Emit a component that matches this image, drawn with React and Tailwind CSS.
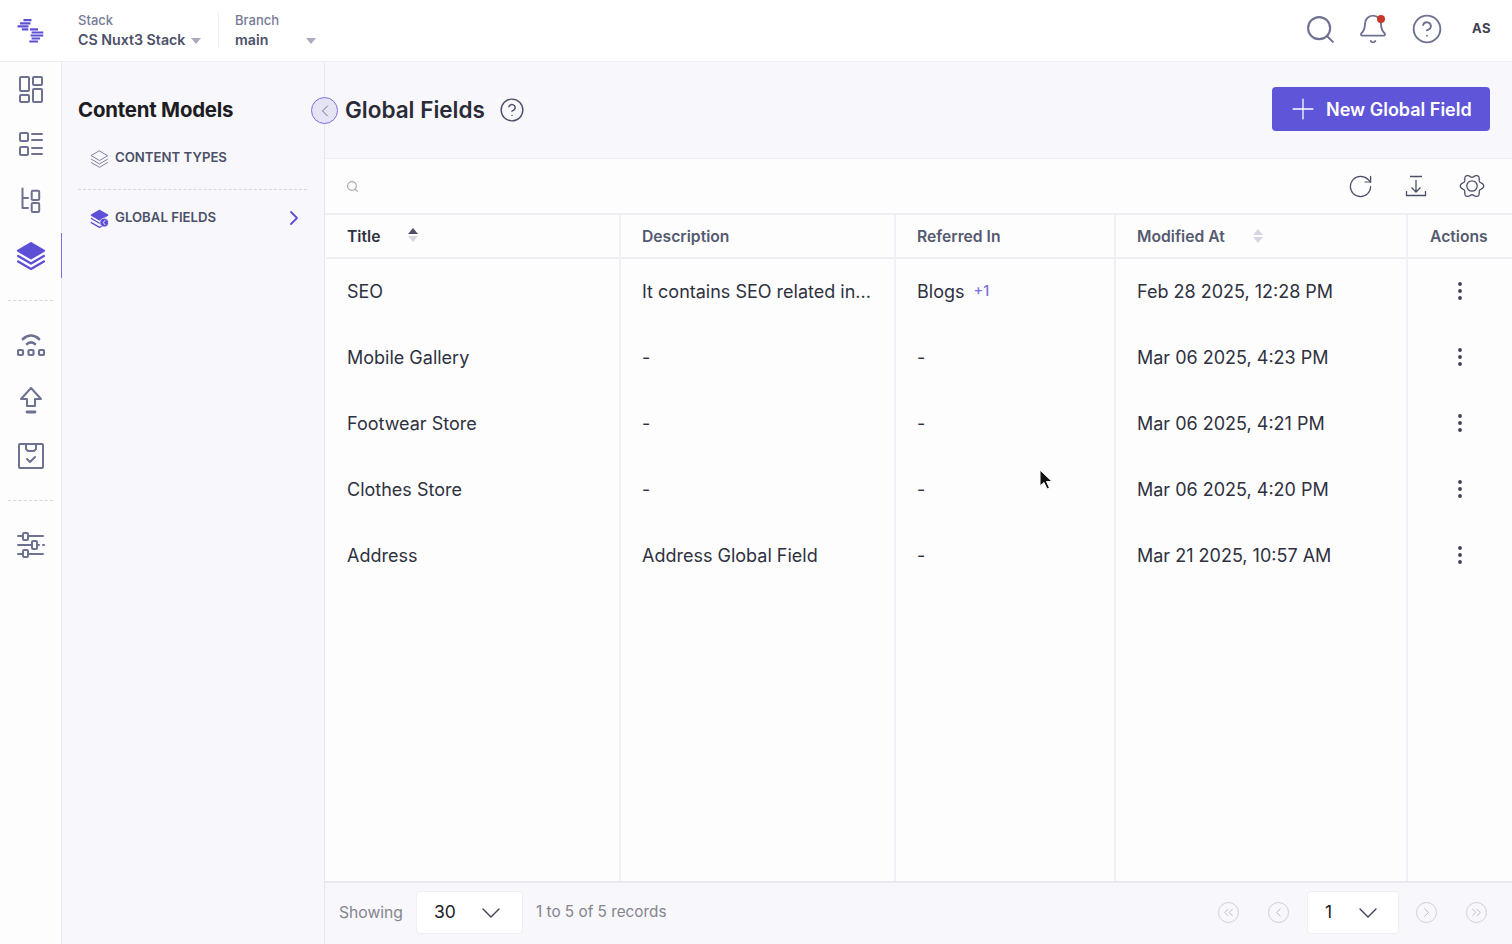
import React from 'react';
import { ChevronDown, ChevronLeft, ChevronRight, ChevronsLeft, ChevronsRight, CircleHelp, Plus, RotateCw, Search, MoreVertical, Bell } from 'lucide-react';

const FONT = 'font-[Inter,sans-serif]';

function Logo() {
  return (
    <svg width="28" height="24" viewBox="0 0 28 24" fill="none" stroke="#5d50d6" strokeWidth="2.2">
      <path d="M6.500 1.200h8M3 4.300h10.500M.5 7.400h11M4.800 10.400h6.500" />
      <path d="M13 10.400h8M14.600 13.500h11.700M13.600 16.500h12.700M14.600 19.500h8.400M12.300 22.500h8.700" />
    </svg>
  );
}

const RailIcon = ({ children }) => (
  <svg width="28" height="28" viewBox="0 0 28 28" fill="none" stroke="#6e7291" strokeWidth="2" strokeLinejoin="round" strokeLinecap="round">
    {children}
  </svg>
);

function LayersIcon({ size = 28, color = '#6e7291', filled, strokeWidth = 1.3 }) {
  return (
    <svg width={size} height={size} viewBox="0 0 28 28" fill="none" stroke={color} strokeWidth={strokeWidth} strokeLinejoin="round" strokeLinecap="round">
      <path d="M14 3 26 10 14 17 2 10Z" fill={filled ? color : 'none'} />
      <path d="M2 15l12 7 12-7" />
      <path d="M2 20l12 7 12-7" />
    </svg>
  );
}

// global fields icon: filled stack with a small clock badge
function GlobalFieldIcon() {
  return (
    <svg width="19" height="19" viewBox="0 0 28 28" fill="none" stroke="#5d50d6" strokeWidth="2" strokeLinejoin="round" strokeLinecap="round">
      <path d="M14 2 26 9 14 16 2 9Z" fill="#5d50d6" />
      <path d="M2 14l12 7M2 20l12 7 4-2" />
      <circle cx="21" cy="20" r="6.500" fill="#5d50d6" stroke="#f7f7fc" strokeWidth="1" />
      <path d="M22 17l-2.500 3 2.500 3" stroke="#f7f7fc" strokeWidth="1.400" />
    </svg>
  );
}

const gearPath = Array.from({ length: 72 }, (_, i) => {
  const a = (i * 5 * Math.PI) / 180;
  const r = 10.2 + 1.5 * Math.cos(6 * a);
  return `${i === 0 ? 'M' : 'L'}${(13 + r * Math.cos(a)).toFixed(2)} ${(13 + r * Math.sin(a)).toFixed(2)}`;
}).join('') + 'Z';

function Rail() {
  return (
    <div className="w-[62px] shrink-0 flex flex-col items-center bg-[#fdfdfe] border-r border-[#e9e9f1] relative">
      <div className="h-[54px] flex items-center justify-center"><RailIcon>
        <rect x="3" y="2" width="9" height="14" rx="1" /><rect x="16" y="2" width="9" height="8" rx="1" />
        <rect x="3" y="20" width="9" height="7" rx="1" /><rect x="16" y="14" width="9" height="13" rx="1" />
      </RailIcon></div>
      <div className="h-[56px] flex items-center justify-center"><RailIcon>
        <rect x="3" y="3" width="8" height="8" rx="1" /><rect x="3" y="17" width="8" height="8" rx="1" />
        <path d="M15 4h10M15 10h10M15 18h10M15 24h10" />
      </RailIcon></div>
      <div className="h-[55px] flex items-center justify-center"><RailIcon>
        <path d="M5.500 2.500V22H11M5.500 12H11" /><rect x="14.700" y="4.700" width="7.500" height="9.300" rx="1" /><rect x="14.700" y="17" width="7.500" height="9" rx="1" />
      </RailIcon></div>
      <div className="h-[56px] flex items-center justify-center">
        <LayersIcon color="#5d50d6" filled strokeWidth={2.2} size={30} />
      </div>
      <div className="absolute right-[-1px] top-[171px] w-[1px] h-[45px] bg-[#7b70e0]" />
      <div className="w-[45px] border-t border-dashed border-[#d5d6e0] mt-[17px]" />
      <div className="h-[88px] flex items-center justify-center"><RailIcon>
        <path d="M6 8c5-4.500 11-4.500 16 0" strokeWidth="2.800" /><path d="M10 13c2.500-2 5.500-2 8 0" strokeWidth="2.600" />
        <rect x="1" y="19" width="5" height="5" rx="1" strokeWidth="2.200" /><rect x="11.500" y="19" width="5" height="5" rx="1" strokeWidth="2.200" /><rect x="22" y="19" width="5" height="5" rx="1" strokeWidth="2.200" />
      </RailIcon></div>
      <div className="h-[22px] flex items-center justify-center"><RailIcon>
        <path d="M14 2 4 13h6v7h8v-7h6Z" /><path d="M10 26h8" strokeWidth="2.800" />
      </RailIcon></div>
      <div className="h-[89px] flex items-center justify-center"><RailIcon>
        <rect x="2" y="2" width="24" height="24" rx="1" /><path d="M9 2v5l2 2h6l2-2V2M10 17l3 3 5-5" />
      </RailIcon></div>
      <div className="w-[45px] border-t border-dashed border-[#d5d6e0]" />
      <div className="h-[88px] flex items-center justify-center"><RailIcon>
        <path d="M1 5h4M12 5h14M1 14h13M21 14h1M26 14h1M1 23h4M12 23h14" /><rect x="6" y="2" width="5" height="7" rx="1" /><rect x="15" y="10" width="5" height="8" rx="1" /><rect x="6" y="19" width="5" height="7" rx="1" />
      </RailIcon></div>
    </div>
  );
}

function TopBar() {
  return (
    <div className="h-[62px] shrink-0 flex items-center bg-white border-b border-[#ededf3]">
      <div className="w-[62px] flex justify-center pt-[1px]"><Logo /></div>
      <div className="pl-[16px] w-[140px] shrink-0">
        <div className="text-[13px] leading-[18px] font-medium text-[#767b98]">Stack</div>
        <div className="flex items-center gap-[6px] text-[14.200px] leading-[22px] font-semibold text-[#4c5067] whitespace-nowrap">
          CS Nuxt3 Stack
          <span className="w-0 h-0 border-x-[5px] border-x-transparent border-t-[6px] border-t-[#a9acbc] mt-[2px]" />
        </div>
      </div>
      <div className="ml-[16px] h-[36px] border-l border-[#f0f0f4]" />
      <div className="pl-[16px] w-[97px]">
        <div className="text-[13px] leading-[18px] font-medium text-[#767b98]">Branch</div>
        <div className="flex items-center justify-between text-[14.200px] leading-[22px] font-semibold text-[#4c5067]">
          main
          <span className="w-0 h-0 border-x-[5px] border-x-transparent border-t-[6px] border-t-[#a9acbc] mt-[2px]" />
        </div>
      </div>
      <div className="ml-auto flex items-center text-[#6e7291] -mt-[3px]">
        <Search size={33} strokeWidth={1.500} />
        <div className="relative ml-[20px] mr-[22px]">
          <Bell size={32} strokeWidth={1.400} />
          <span className="absolute top-[2px] right-[4px] w-[8px] h-[8px] rounded-full bg-[#c8372a]" />
        </div>
        <CircleHelp size={32} strokeWidth={1.400} />
        <div className="w-[69px] pl-[29px] text-[13px] font-bold tracking-[0.5px] text-[#3f4254]">AS</div>
      </div>
    </div>
  );
}

function SidePanel() {
  return (
    <div className="w-[263px] shrink-0 bg-[#f7f7fc] border-r border-[#e6e6ee] pl-[16px] pr-[17px] relative">
      <div className="text-[20.400px] leading-[28px] font-bold text-[#1c1c22] tracking-[-0.2px] mt-[34px]">Content Models</div>
      <div className="flex items-center gap-[6px] h-[32px] mt-[18px] pl-[12px] text-[13.200px] font-semibold text-[#4c5067]">
        <LayersIcon size={19} />
        CONTENT TYPES
      </div>
      <div className="border-t border-dashed border-[#d5d6e0] mt-[15px]" />
      <div className="flex items-center gap-[6px] h-[32px] mt-[12px] pl-[12px] text-[13.200px] font-semibold text-[#4c5067]">
        <GlobalFieldIcon />
        GLOBAL FIELDS
        <ChevronRight className="ml-auto mr-[1px] text-[#5d50d6]" size={24} strokeWidth={1.800} />
      </div>
      <div className="absolute right-[-14px] top-[35px] w-[27px] h-[27px] rounded-full bg-[#e4e4f5] border border-[#7b70e0] flex items-center justify-center text-[#6e7291]">
        <ChevronLeft size={20} strokeWidth={1.200} />
      </div>
    </div>
  );
}

const rows = [
  { title: 'SEO', description: 'It contains SEO related in...', referred: 'Blogs', extra: '+1', modified: 'Feb 28 2025, 12:28 PM' },
  { title: 'Mobile Gallery', description: '-', referred: '-', modified: 'Mar 06 2025, 4:23 PM' },
  { title: 'Footwear Store', description: '-', referred: '-', modified: 'Mar 06 2025, 4:21 PM' },
  { title: 'Clothes Store', description: '-', referred: '-', modified: 'Mar 06 2025, 4:20 PM' },
  { title: 'Address', description: 'Address Global Field', referred: '-', modified: 'Mar 21 2025, 10:57 AM' },
];

function SortArrows({ active }) {
  return (
    <span className="flex flex-col gap-[2px]">
      <span className={`w-0 h-0 border-x-[5px] border-x-transparent border-b-[6px] ${active ? 'border-b-[#4c5067]' : 'border-b-[#d5d6e0]'}`} />
      <span className="w-0 h-0 border-x-[5px] border-x-transparent border-t-[6px] border-t-[#d5d6e0]" />
    </span>
  );
}

function Cell({ children }) {
  return <div className="h-[66px] flex items-center px-[21px] pb-[2px] text-[18px] text-[#2f3140] whitespace-nowrap">{children}</div>;
}

function HeaderCell({ children, dark }) {
  return (
    <div className={`h-[44px] shrink-0 flex items-center px-[21px] pt-[2px] text-[15.700px] font-semibold border-b-2 border-[#eeeef3] ${dark ? 'text-[#2f3140]' : 'text-[#565a70]'}`}>
      {children}
    </div>
  );
}

function Table() {
  return (
    <div className="flex-1 flex min-h-0 bg-[#fdfdfe]">
      <div className="w-[296px] pl-[1px] flex flex-col border-r-2 border-[#f1f1f5]">
        <HeaderCell dark>Title<span className="ml-[28px] -mt-[4px]"><SortArrows active /></span></HeaderCell>
        {rows.map((r) => <Cell key={r.title}>{r.title}</Cell>)}
      </div>
      <div className="w-[275px] flex flex-col border-r-2 border-[#f1f1f5]">
        <HeaderCell>Description</HeaderCell>
        {rows.map((r) => <Cell key={r.title}>{r.description}</Cell>)}
      </div>
      <div className="w-[220px] flex flex-col border-r-2 border-[#f1f1f5]">
        <HeaderCell>Referred In</HeaderCell>
        {rows.map((r) => (
          <Cell key={r.title}>
            {r.referred}
            {r.extra && <span className="ml-[9px] text-[14.500px] font-medium text-[#7b70e0]">{r.extra}</span>}
          </Cell>
        ))}
      </div>
      <div className="w-[292px] flex flex-col border-r-2 border-[#f1f1f5]">
        <HeaderCell>Modified At<span className="ml-[28px] -mt-[2px]"><SortArrows /></span></HeaderCell>
        {rows.map((r) => <Cell key={r.title}>{r.modified}</Cell>)}
      </div>
      <div className="flex-1 flex flex-col">
        <HeaderCell><span className="pl-[1px]">Actions</span></HeaderCell>
        {rows.map((r) => (
          <div key={r.title} className="h-[66px] pb-[2px] flex items-center justify-center text-[#3f4254]">
            <MoreVertical size={24} strokeWidth={1.800} />
          </div>
        ))}
      </div>
    </div>
  );
}

function Select({ value, className }) {
  return (
    <div className={`h-[43px] flex items-center justify-between bg-white border border-[#eeeef3] rounded-[4px] text-[17.500px] text-[#1c1c22] ${className}`}>
      {value}
      <ChevronDown size={32} strokeWidth={1} className="text-[#3f4254]" />
    </div>
  );
}

function PageBtn({ children }) {
  return (
    <span className="w-[21px] h-[21px] rounded-full border-[1.500px] border-[#cfcfd6] flex items-center justify-center text-[#b9b9c1]">
      {children}
    </span>
  );
}

function Footer() {
  return (
    <div className="h-[63px] shrink-0 flex items-center bg-[#f7f7fc] border-t-2 border-[#e9e9f1] pl-[14px] pr-[25px] pb-[2px] text-[#85858e]">
      <span className="text-[15.700px]">Showing</span>
      <Select value="30" className="w-[107px] ml-[13px] pl-[17px] pr-[15px]" />
      <span className="ml-[13px] text-[15.300px]">1 to 5 of 5 records</span>
      <div className="ml-auto flex items-center">
        <PageBtn><ChevronsLeft size={15} strokeWidth={1.500} /></PageBtn>
        <span className="ml-[29px]" />
        <PageBtn><ChevronLeft size={15} strokeWidth={1.500} /></PageBtn>
        <Select value="1" className="w-[92px] ml-[18px] mr-[17px] pl-[17px] pr-[14px]" />
        <PageBtn><ChevronRight size={15} strokeWidth={1.500} /></PageBtn>
        <span className="ml-[29px]" />
        <PageBtn><ChevronsRight size={15} strokeWidth={1.500} /></PageBtn>
      </div>
    </div>
  );
}

function Main() {
  return (
    <div className="flex-1 min-w-0 flex flex-col">
      <div className="h-[97px] shrink-0 flex items-center bg-[#f7f7fc] pl-[20px] pr-[22px] border-b border-[#eeeef3]">
        <h1 className="text-[22.500px] font-semibold text-[#2a2b36]">Global Fields</h1>
        <CircleHelp size={26} strokeWidth={1.300} className="ml-[14px] text-[#4c5067]" />
        <button className="ml-auto -mt-[2px] h-[44px] w-[218px] flex items-center gap-[6px] pl-[14px] rounded-[4px] bg-[#5f55d8] text-white text-[18px] font-semibold">
          <Plus size={34} strokeWidth={0.900} />
          New Global Field
        </button>
      </div>
      <div className="h-[56px] shrink-0 flex items-center bg-[#fdfdfe] pl-[21px] pr-[27px] border-b-2 border-[#eeeef3]">
        <Search size={13} strokeWidth={2.200} className="text-[#a9a9b0]" />
        <div className="ml-auto flex items-center text-[#4c5067]">
          <RotateCw size={27} strokeWidth={1.100} />
          <svg className="ml-[29px]" width="26" height="26" viewBox="0 0 26 26" fill="none" stroke="currentColor" strokeWidth="1.300">
            <path d="M7 3.500h12M13 7v12M8.500 14.500 13 19l4.500-4.500M3.500 18v4.500h19V18" />
          </svg>
          <svg className="ml-[30px]" width="26" height="26" viewBox="0 0 26 26" fill="none" stroke="currentColor" strokeWidth="1.300" strokeLinejoin="round">
            <path d={gearPath} />
            <circle cx="13" cy="13" r="5.200" />
          </svg>
        </div>
      </div>
      <Table />
      <Footer />
    </div>
  );
}

export default function App() {
  return (
    <div className={`h-[944px] w-[1512px] overflow-hidden relative flex flex-col bg-white ${FONT}`}>
      <TopBar />
      <div className="flex-1 flex min-h-0">
        <Rail />
        <SidePanel />
        <Main />
      </div>
      <svg className="absolute left-[1039px] top-[469px]" width="14" height="22" viewBox="0 0 14 22">
        <path d="M1 1v16l4-3.500 3 6.500 2.500-1-3-6.500h5.500Z" fill="#111" stroke="#fff" strokeWidth="1" />
      </svg>
    </div>
  );
}
